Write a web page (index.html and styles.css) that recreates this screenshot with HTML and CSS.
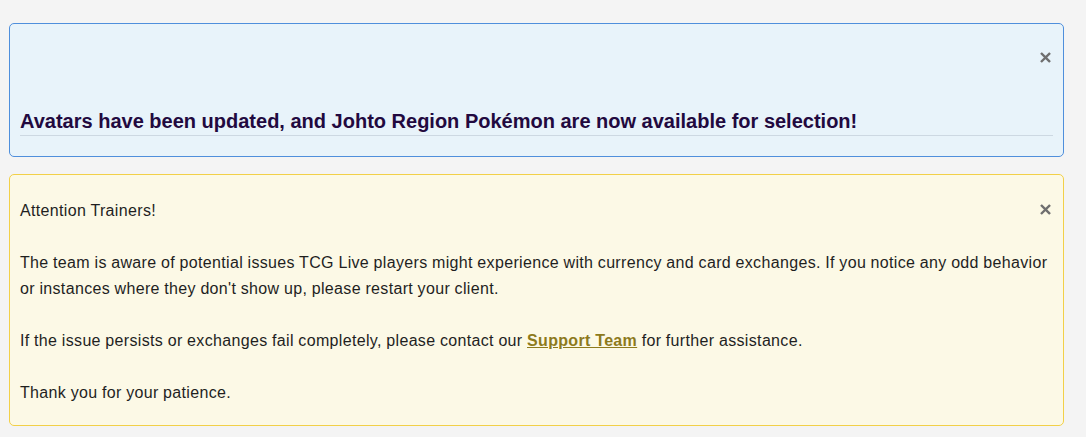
FILE: index.html
```html
<!DOCTYPE html>
<html lang="en">
<head>
<meta charset="utf-8">
<title>Alerts</title>
<link rel="stylesheet" href="styles.css">
</head>
<body>
<div class="alerts">
  <div class="alert alert-info">
    <button class="close" aria-label="Close"><svg viewBox="0 0 12 12" width="11" height="11"><path d="M2 2 L10 10 M10 2 L2 10" stroke="currentColor" stroke-width="2.6" stroke-linecap="square"/></svg></button>
    <h3 class="alert-title">Avatars have been updated, and Johto Region Pokémon are now available for selection!</h3>
  </div>
  <div class="alert alert-warning">
    <button class="close" aria-label="Close"><svg viewBox="0 0 12 12" width="11" height="11"><path d="M2 2 L10 10 M10 2 L2 10" stroke="currentColor" stroke-width="2.6" stroke-linecap="square"/></svg></button>
    <p>Attention Trainers!</p>
    <p>The team is aware of potential issues TCG Live players might experience with currency and card exchanges. If you notice any odd behavior or instances where they don't show up, please restart your client.</p>
    <p>If the issue persists or exchanges fail completely, please contact our <a href="#">Support Team</a> for further assistance.</p>
    <p>Thank you for your patience.</p>
  </div>
</div>
</body>
</html>
```
FILE: styles.css
```css
html, body {
  margin: 0;
  padding: 0;
  background: #f4f4f4;
}
body {
  font-family: "Liberation Sans", Arial, sans-serif;
  color: #1f1f1f;
}
.alerts {
  padding: 23px 22px 0 9px;
  display: flex;
  flex-direction: column;
  gap: 17px;
}
.alert {
  position: relative;
  border-radius: 5px;
  padding: 0 10px;
}
.alert-info {
  background: #e8f3fa;
  border: 1px solid #4f8fdc;
  padding-top: 85px;
  padding-bottom: 20px;
}
.alert-warning {
  background: #fcf9e6;
  border: 1px solid #f2d048;
  padding-top: 23px;
  padding-bottom: 19px;
}
.close {
  position: absolute;
  right: 12px;
  background: none;
  border: 0;
  padding: 0;
  color: #6f6f6f;
  line-height: 0;
  cursor: pointer;
}
.alert-info .close { top: 28px; }
.alert-warning .close { top: 29px; }
.alert-title {
  margin: 0;
  font-size: 20px;
  line-height: 24px;
  font-weight: bold;
  color: #22093f;
  padding-bottom: 2px;
  border-bottom: 1px solid #cdd8e2;
}
.alert-warning p {
  margin: 0 0 26px;
  font-size: 16px;
  line-height: 26px;
  letter-spacing: 0.34px;
  word-spacing: -0.3px;
}
.alert-warning p:last-child { margin-bottom: 0; }
.alert-warning a {
  color: #8d7a1c;
  font-weight: bold;
  text-decoration: underline;
}
```
